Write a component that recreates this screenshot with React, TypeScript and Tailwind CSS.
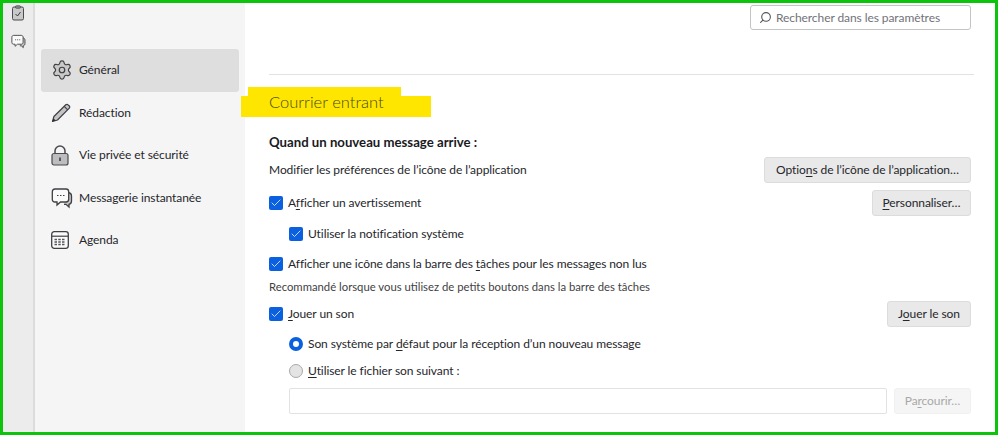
import React from "react";
import { Check, Search, Settings } from "lucide-react";

const font = "font-['Lato','Noto_Sans',sans-serif]";

// Thunderbird-style sidebar drawings
function ClipboardIcon() {
  return (
    <svg width="14" height="16" viewBox="0 0 14 16" fill="none">
      <rect x="1.5" y="2" width="11" height="13" rx="1.5" fill="#c9c9c9" stroke="#4a4a4f" />
      <rect x="4.5" y="0.8" width="5" height="2.4" rx="0.8" fill="#8f8f93" stroke="#4a4a4f" strokeWidth="0.8" />
      <path d="M4.5 9l2 2 3-4" stroke="#3a3a3f" strokeWidth="1" />
    </svg>
  );
}

function ChatIcon({ size }: { size: number }) {
  return (
    <svg width={size} height={size} viewBox="0 0 22 22" fill="none">
      <path d="M17 5.5c2 .3 3.5 1.3 3.5 3.5v5c0 1.800-1 3-2.500 3.300V20l-3-2.700h-2" fill="#c9c9c9" stroke="#3f3f44" strokeWidth="1.300" />
      <path d="M4 2h11c1.700 0 2.700 1 2.700 2.700v7.600c0 1.700-1 2.700-2.700 2.700H9.500L6 18v-3H4c-1.700 0-2.700-1-2.700-2.700V4.700C1.300 3 2.300 2 4 2z" fill="#fafafa" stroke="#3f3f44" strokeWidth="1.300" />
      <path d="M6 8.500h1.500M9 8.500h1.500M12 8.500h1.500" stroke="#3f3f44" strokeWidth="1.200" />
    </svg>
  );
}

function PencilIcon() {
  return (
    <svg width="20" height="20" viewBox="0 0 20 20" fill="none">
      <path d="M1.500 18.500l1.400-5L14.800 1.800c.7-.7 1.700-.7 2.300 0l1.200 1.200c.6.600.6 1.600 0 2.200L6.500 17z" fill="#c4c4c6" stroke="#3f3f44" strokeWidth="1.200" strokeLinejoin="round" />
      <path d="M1.500 18.500l.9-3.200 2.300 2.300z" fill="#2f2f33" />
      <path d="M13.200 3.400l3.500 3.500" stroke="#3f3f44" strokeWidth="1.100" />
    </svg>
  );
}

function LockIcon() {
  return (
    <svg width="18" height="21" viewBox="0 0 18 21" fill="none">
      <path d="M4 9V6a5 5 0 0110 0v3" stroke="#4a4a4f" strokeWidth="1.500" />
      <rect x="1" y="8.500" width="16" height="11.500" rx="2" fill="#bdbdbf" stroke="#4a4a4f" strokeWidth="1.200" />
      <rect x="8.200" y="12.500" width="1.600" height="3.500" fill="#3f3f44" />
    </svg>
  );
}

function CalendarIcon() {
  return (
    <svg width="18" height="18" viewBox="0 0 18 18" fill="none">
      <rect x="0.700" y="0.700" width="16.600" height="16.600" rx="2.500" fill="#fafafa" stroke="#3f3f44" strokeWidth="1.300" />
      <path d="M1 5.200h16" stroke="#3f3f44" strokeWidth="1.200" />
      <path d="M3.500 8.500h11M3.500 11h11M3.500 13.500h11" stroke="#55555a" strokeWidth="1.400" strokeDasharray="2.500 1.250" />
    </svg>
  );
}

function NavItem({ icon, label, active }: { icon: React.ReactNode; label: string; active?: boolean }) {
  return (
    <div className={`flex h-[42.5px] items-center rounded-[3px] pl-[10px] ${active ? "bg-[#dedede]" : ""}`}>
      <span className="flex w-[28px] justify-start">{icon}</span>
      <span className="text-[#26262b]">{label}</span>
    </div>
  );
}

function CheckBox() {
  return (
    <span className="mr-[5px] flex h-[14px] w-[14px] shrink-0 items-center justify-center rounded-[2px] bg-[#0a60df]">
      <Check size={12} strokeWidth={1.500} className="text-white" />
    </span>
  );
}

function Btn({ children, disabled, className }: { children: React.ReactNode; disabled?: boolean; className?: string }) {
  return (
    <button
      className={`flex h-[26px] items-center justify-center rounded-[3px] border ${
        disabled ? "border-[#f0f0f0] bg-[#f5f5f5] text-[#a8a8a8]" : "border-[#dcdcdc] bg-[#e9e9e9] text-[#26262b]"
      } ${className ?? ""}`}
    >
      <span>{children}</span>
    </button>
  );
}

export default function App() {
  return (
    <div className={`box-border flex h-[435px] w-[998px] overflow-hidden border-[3px] border-[#0cc40c] bg-white text-[12px] tracking-[-0.08px] text-[#26262b] underline-offset-2 ${font}`}>
      {/* icon rail */}
      <div className="flex w-[32px] shrink-0 flex-col items-center gap-[13px] border-r-2 border-[#dcdcdc] bg-[#ececec] pt-[2px]">
        <ClipboardIcon />
        <ChatIcon size={15} />
      </div>

      {/* categories */}
      <div className="w-[210px] shrink-0 bg-[#f5f5f5] pl-[6px] pr-[6px] pt-[46px]">
        <NavItem active icon={<Settings size={22} strokeWidth={1.300} fill="#c9c9c9" className="text-[#3f3f44]" />} label="Général" />
        <NavItem icon={<PencilIcon />} label="Rédaction" />
        <NavItem icon={<LockIcon />} label="Vie privée et sécurité" />
        <NavItem icon={<ChatIcon size={22} />} label="Messagerie instantanée" />
        <NavItem icon={<CalendarIcon />} label="Agenda" />
      </div>

      {/* settings pane */}
      <div className="min-w-0 flex-1 pl-[24px] pr-[21px]">
        <div className="flex justify-end pr-[3px] pt-[2px]">
          <div className="flex h-[25px] w-[221px] items-center rounded-[3px] border border-[#c4c4c4] pl-[8px]">
            <Search size={13} className="mr-[4px] -scale-x-100 text-[#555]" />
            <span className="text-[#72727a]">Rechercher dans les paramètres</span>
          </div>
        </div>
        <div className="mt-[44px] border-t border-[#e2e2e2]" />

        <div className="relative mt-[12px] flex h-[30px] items-center">
          <div className="absolute left-[-28px] top-[9px] h-[21px] w-[190px] bg-[#ffe600]" />
          <div className="absolute left-[-21px] top-0 h-[9px] w-[153px] bg-[#ffe600]" />
          <h1 className="relative text-[16.5px] font-light tracking-normal text-[#4a4a10]">Courrier entrant</h1>
        </div>

        <p className="mt-[15px] text-[13.2px] font-bold leading-[20px] tracking-normal text-[#1a1a1e]">Quand un nouveau message arrive :</p>

        <div className="mt-[5px] flex h-[26px] items-center justify-between pr-[3px]">
          <span>Modifier les préférences de l’icône de l’application</span>
          <Btn className="w-[207px]">Optio<u>n</u>s de l’icône de l’application…</Btn>
        </div>

        <div className="mt-[7px] flex h-[26px] items-center justify-between pr-[3px]">
          <label className="flex items-center"><CheckBox /><span>A<u>f</u>ficher un avertissement</span></label>
          <Btn className="w-[99px]"><u>P</u>ersonnaliser…</Btn>
        </div>

        <label className="mt-[5px] flex h-[26px] items-center pl-[20px]"><CheckBox /><span>Utiliser la notification système</span></label>

        <label className="mt-[4px] flex h-[26px] items-center"><CheckBox /><span>Afficher une icône dans la barre des <u>t</u>âches pour les messages non lus</span></label>

        <p className="mt-[1px] text-[11.3px] leading-[18px] tracking-normal text-[#3f3f44]">Recommandé lorsque vous utilisez de petits boutons dans la barre des tâches</p>

        <div className="mt-[5px] flex h-[26px] items-center justify-between pr-[3px]">
          <label className="flex items-center"><CheckBox /><span><u>J</u>ouer un son</span></label>
          <Btn className="w-[84px]">J<u>o</u>uer le son</Btn>
        </div>

        <label className="mt-[4px] flex h-[26px] items-center pl-[20px]">
          <span className="mr-[5px] h-[14px] w-[14px] rounded-full border-[4px] border-[#0a60df] bg-white" />
          <span>Son système par <u>d</u>éfaut pour la réception d’un nouveau message</span>
        </label>

        <label className="mt-[1px] flex h-[26px] items-center pl-[20px]">
          <span className="mr-[5px] h-[14px] w-[14px] rounded-full border border-[#a8a8a8] bg-[#e4e4e4]" />
          <span><u>U</u>tiliser le fichier son suivant :</span>
        </label>

        <div className="mt-[4px] flex h-[26px] items-center justify-between gap-[7px] pl-[20px] pr-[3px]">
          <div className="h-[26px] flex-1 rounded-[2px] border border-[#e2e2e2] bg-white" />
          <Btn disabled className="w-[77px]">Pa<u>r</u>courir…</Btn>
        </div>
      </div>
    </div>
  );
}
